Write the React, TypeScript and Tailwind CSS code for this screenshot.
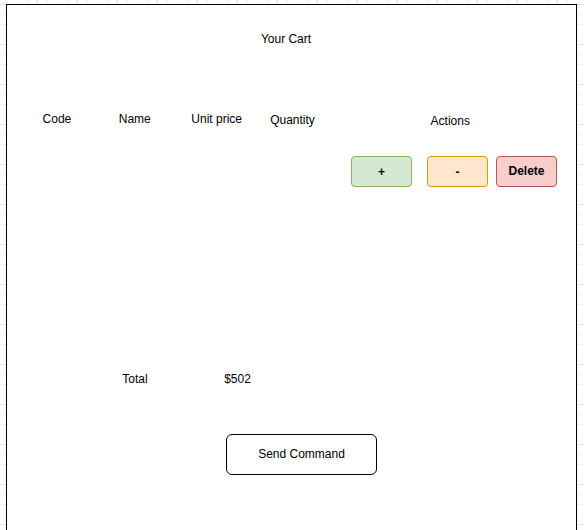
import React from "react";

export default function App() {
  return (
    <div className="w-[584px] h-[530px] overflow-hidden bg-white [background-image:linear-gradient(to_right,#e2e2e2_1px,transparent_1px),linear-gradient(to_bottom,#e2e2e2_1px,transparent_1px),linear-gradient(to_right,#f3f3f3_1px,transparent_1px),linear-gradient(to_bottom,#f3f3f3_1px,transparent_1px)] [background-size:40px_40px,40px_40px,10px_10px,10px_10px] [background-position:37px_4px,37px_4px,7px_4px,7px_4px] pt-[4px] pl-[6px] font-['Liberation_Sans',Arial,sans-serif] text-[12px] leading-[14px] text-black">
      <div className="w-[571px] h-[540px] border border-black bg-white flex flex-col">
        <div className="pt-[27px] text-center pr-[11px]">Your Cart</div>

        <div className="mt-[66px] flex items-start">
          <div className="ml-[10px] w-[80px] text-center">Code</div>
          <div className="w-[76px] text-center">Name</div>
          <div className="w-[88px] text-center">Unit price</div>
          <div className="w-[64px] text-center mt-[1px]">Quantity</div>
          <div className="w-[252px] text-center mt-[2px]">Actions</div>
        </div>

        <div className="mt-[28px] flex">
          <button className="ml-[344px] w-[61px] h-[31px] rounded-[4px] border border-[#82b366] bg-[#d5e8d4] font-bold flex items-center justify-center">
            +
          </button>
          <button className="ml-[15px] w-[61px] h-[31px] rounded-[4px] border border-[#d79b00] bg-[#ffe6cc] font-bold flex items-center justify-center">
            -
          </button>
          <button className="ml-[8px] w-[61px] h-[31px] rounded-[4px] border border-[#b85450] bg-[#f8cecc] font-bold flex items-center justify-center pb-[1px]">
            Delete
          </button>
        </div>

        <div className="mt-[185px] flex">
          <div className="ml-[10px] w-[80px]" />
          <div className="w-[76px] text-center">Total</div>
          <div className="w-[129px] text-center">$502</div>
        </div>

        <div className="mt-[48px] flex">
          <button className="ml-[219px] w-[151px] h-[41px] rounded-[6px] border border-black bg-white flex items-center justify-center pb-[1px]">
            Send Command
          </button>
        </div>
      </div>
    </div>
  );
}
